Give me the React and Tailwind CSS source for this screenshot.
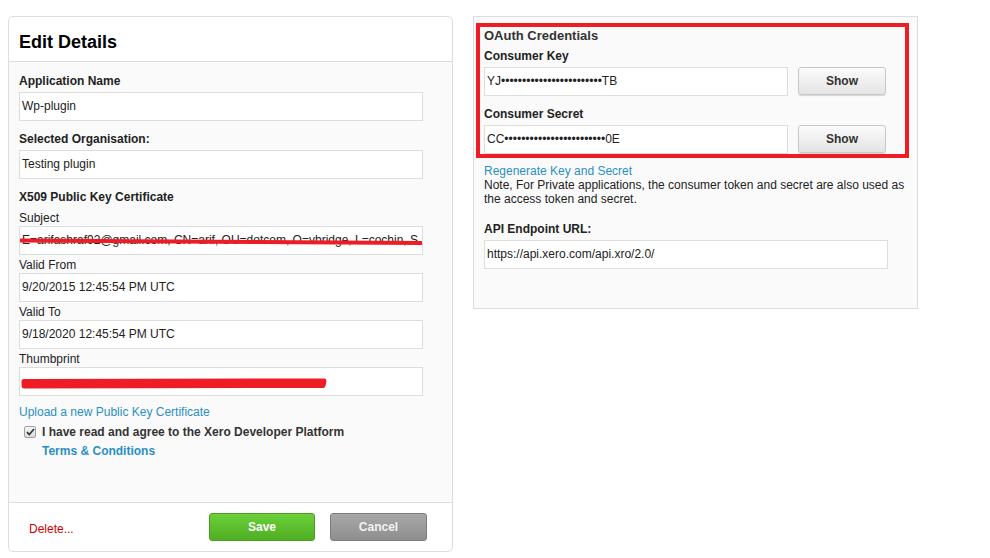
import React from "react"

const font = { fontFamily: '"Liberation Sans", Arial, sans-serif' }

function Field({ label, bold = true, gap = "mt-[11px]", children }) {
  return (
    <div className={gap}>
      <div className={`text-[12px] leading-[15px] text-[#222] ${bold ? "font-bold" : ""}`}>{label}</div>
      {children}
    </div>
  )
}

function TextBox({ value, className = "", children }) {
  return (
    <div
      className={`relative h-[29px] w-[404px] overflow-hidden whitespace-nowrap border border-[#dddddd] bg-white pl-[2px] text-[12px] leading-[27px] text-[#222] ${className}`}
    >
      {value}
      {children}
    </div>
  )
}

function ShowButton() {
  return (
    <button className="h-[28px] w-[88px] rounded-[3px] border border-[#c8c8c8] bg-gradient-to-b from-[#fbfbfb] to-[#e4e4e4] text-[12px] font-bold text-[#333] shadow-[0_1px_1px_rgba(0,0,0,0.15)]">
      Show
    </button>
  )
}

function EditDetails() {
  return (
    <div className="flex h-[536px] w-[445px] flex-col overflow-hidden rounded-[5px] border border-[#dddddd] bg-white">
      <div className="h-[45px] border-b border-[#dddddd] pl-[10px] pt-[14px] text-[18px] font-bold leading-[22px] text-black">
        Edit Details
      </div>
      <div className="flex-1 border-b border-[#dddddd] bg-[#fafafa] px-[10px] pt-[12px]">
        <Field label="Application Name" gap="">
          <div className="mt-[3px]">
            <TextBox value="Wp-plugin" />
          </div>
        </Field>
        <Field label="Selected Organisation:">
          <div className="mt-[3px]">
            <TextBox value="Testing plugin" />
          </div>
        </Field>
        <Field label="X509 Public Key Certificate">
          <div className="mt-[6px] text-[12px] leading-[15px] text-[#222]">Subject</div>
          <TextBox value="E=arifashraf92@gmail.com, CN=arif, OU=dotcom, O=vbridge, L=cochin, S">
            <svg className="absolute left-0 top-0" width="404" height="29">
              <path d="M1 13.5 L402 16" stroke="#ee1c25" strokeWidth="4" strokeLinecap="round" fill="none" />
            </svg>
          </TextBox>
          <Field label="Valid From" bold={false} gap="mt-[3px]">
            <TextBox value="9/20/2015 12:45:54 PM UTC" />
          </Field>
          <Field label="Valid To" bold={false} gap="mt-[3px]">
            <TextBox value="9/18/2020 12:45:54 PM UTC" />
          </Field>
          <Field label="Thumbprint" bold={false} gap="mt-[3px]">
            <TextBox>
              <svg className="absolute left-0 top-0" width="404" height="29">
                <path d="M4 13.5 L304 13 L303 17.5 L4 18 Z" stroke="#ee1c25" strokeWidth="5" strokeLinejoin="round" fill="#ee1c25" />
              </svg>
            </TextBox>
          </Field>
        </Field>
        <div className="mt-[9px] text-[12px] leading-[15px] text-[#2a8fc4]">Upload a new Public Key Certificate</div>
        <div className="mt-[3px] flex pl-[5px]">
          <span className="mr-[6px] mt-[3px] flex h-[12px] w-[12px] items-center justify-center rounded-[2px] border border-[#a0a0a0] bg-gradient-to-b from-[#f4f4f4] to-[#dcdcdc]">
            <svg width="9" height="8" viewBox="0 0 9 8">
              <path d="M1 4.2 L3.3 6.6 L8 1" stroke="#333" strokeWidth="1.7" fill="none" />
            </svg>
          </span>
          <div className="text-[12px] font-bold leading-[19px] text-[#333]">
            I have read and agree to the Xero Developer Platform
            <div className="text-[#2a8fc4]">Terms &amp; Conditions</div>
          </div>
        </div>
      </div>
      <div className="flex h-[48px] items-start pl-[20px] pt-[10px]">
        <div className="mt-[9px] w-[180px] text-[12px] leading-[15px] text-[#cc0000]">Delete...</div>
        <button className="h-[28px] w-[106px] rounded-[3px] border border-[#4a9e20] bg-gradient-to-b from-[#6bd03a] to-[#4fae22] text-[12px] font-bold text-white">
          Save
        </button>
        <button className="ml-[15px] h-[28px] w-[97px] rounded-[3px] border border-[#7d7d7d] bg-gradient-to-b from-[#a8a8a8] to-[#8e8e8e] text-[12px] font-bold text-[#f2f2f2]">
          Cancel
        </button>
      </div>
    </div>
  )
}

function OAuthPanel() {
  return (
    <div className="h-[293px] w-[445px] border border-[#dddddd] bg-[#fafafa] pl-[2px] pt-[6px]">
      <div className="w-[433px] border-[4px] border-[#ee1c25] pl-[4px]">
        <div className="pt-[1px] text-[13px] font-bold leading-[15px] text-[#333]">OAuth Credentials</div>
        <div className="mt-[6px] text-[12px] font-bold leading-[15px] text-[#222]">Consumer Key</div>
        <div className="mt-[3px] flex items-start">
          <div className="h-[29px] w-[304px] border border-[#dddddd] bg-white pl-[2px] text-[12px] leading-[27px] text-[#222]">
            YJ••••••••••••••••••••••••TB
          </div>
          <div className="ml-[10px]">
            <ShowButton />
          </div>
        </div>
        <div className="mt-[11px] text-[12px] font-bold leading-[15px] text-[#222]">Consumer Secret</div>
        <div className="mt-[3px] flex items-start">
          <div className="h-[29px] w-[304px] border border-[#dddddd] bg-white pl-[2px] text-[12px] leading-[27px] text-[#222]">
            CC••••••••••••••••••••••••0E
          </div>
          <div className="ml-[10px]">
            <ShowButton />
          </div>
        </div>
      </div>
      <div className="pl-[8px] pr-[4px]">
        <div className="mt-[6px] text-[12px] leading-[14px] text-[#2a8fc4]">Regenerate Key and Secret</div>
        <div className="text-[12px] leading-[14px] text-[#222]">
          Note, For Private applications, the consumer token and secret are also used as the access token and secret.
        </div>
        <div className="mt-[16px] text-[12px] font-bold leading-[15px] text-[#222]">API Endpoint URL:</div>
        <div className="mt-[3px] h-[29px] w-[404px] border border-[#dddddd] bg-white pl-[2px] text-[12px] leading-[27px] text-[#222]">
          https://api.xero.com/api.xro/2.0/
        </div>
      </div>
    </div>
  )
}

export default function App() {
  return (
    <div style={font} className="h-[558px] w-[990px] bg-white">
      <div className="flex items-start gap-[20px] pl-[8px] pt-[16px]">
        <EditDetails />
        <OAuthPanel />
      </div>
    </div>
  )
}
